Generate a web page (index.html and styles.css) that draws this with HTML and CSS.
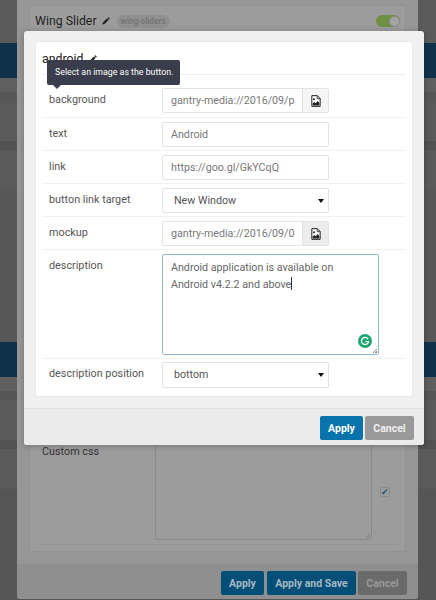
FILE: index.html
```html
<!DOCTYPE html>
<html lang="en">
<head>
    <meta charset="UTF-8">
    <meta name="viewport" content="width=device-width, initial-scale=1.0">
    <title>Wing Slider</title>
    <link rel="stylesheet" href="styles.css">
</head>
<body>
    <svg class="icon-defs" width="0" height="0">
        <symbol id="pencil" viewBox="0 0 10 10">
            <path d="M0.5 9.5l0.6-2.7 5-5 2.1 2.1-5 5zM6.8 1.4l0.7-0.7a0.6 0.6 0 0 1 0.9 0l1 1a0.6 0.6 0 0 1 0 0.9l-0.7 0.7z" fill="currentColor"/>
        </symbol>
        <symbol id="file-image" viewBox="0 0 12 14">
            <path d="M1 .6h6.6L11 4v9.4H1z" fill="#fff" stroke="#222" stroke-width="1.2"/>
            <path d="M7.4.8V4.2H11" fill="none" stroke="#222" stroke-width="1"/>
            <circle cx="3.6" cy="5" r="1.2" fill="#222"/>
            <path d="M2 12.4V10l2-1.8 1.6 1.4L8 7l2 2.4v3z" fill="#222"/>
        </symbol>
    </svg>

    <div class="backdrop">
        <div class="band band-a"></div>
        <div class="band band-blue"></div>
        <div class="band band-b"></div>
        <div class="band band-c"></div>
        <div class="band band-d"></div>
        <div class="band band-e"></div>
        <div class="band band-d"></div>
        <div class="band band-f"></div>
        <div class="band band-blue"></div>
        <div class="band band-b"></div>
        <div class="band band-c"></div>
        <div class="band band-d"></div>
        <div class="band band-e"></div>
        <div class="band band-d"></div>
    </div>

    <div class="outer-modal">
        <div class="outer-card">
            <div class="outer-head">
                <span class="outer-title">Wing Slider</span>
                <svg class="pencil-lg"><use href="#pencil"/></svg>
                <span class="badge">wing-sliders</span>
                <span class="toggle"><span class="knob"></span></span>
            </div>
            <div class="css-row">
                <div class="css-label">Custom css</div>
                <div class="css-field">
                    <div class="css-area"><span class="grip"></span></div>
                </div>
                <div class="css-check"><span class="checkbox">&#10003;</span></div>
            </div>
        </div>
        <div class="outer-foot">
            <button class="btn btn-blue btn-apply">Apply</button>
            <button class="btn btn-blue btn-save">Apply and Save</button>
            <button class="btn btn-grey">Cancel</button>
        </div>
    </div>

    <div class="modal">
        <div class="card">
            <div class="card-head">
                <span class="card-title">android</span>
                <svg class="pencil"><use href="#pencil"/></svg>
            </div>

            <div class="row row-first">
                <label class="label">background</label>
                <div class="picker">
                    <span class="picker-value">gantry-media://2016/09/p</span>
                    <span class="picker-btn"><svg class="file-icon"><use href="#file-image"/></svg></span>
                </div>
            </div>
            <div class="row">
                <label class="label">text</label>
                <div class="input">Android</div>
            </div>
            <div class="row">
                <label class="label">link</label>
                <div class="input">https://goo.gl/GkYCqQ</div>
            </div>
            <div class="row">
                <label class="label">button link target</label>
                <div class="select">New Window<span class="caret"></span></div>
            </div>
            <div class="row">
                <label class="label">mockup</label>
                <div class="picker">
                    <span class="picker-value">gantry-media://2016/09/0</span>
                    <span class="picker-btn picker-btn-on"><svg class="file-icon"><use href="#file-image"/></svg></span>
                </div>
            </div>
            <div class="row">
                <label class="label">description</label>
                <div class="textarea">
                    Android application is available on<br>
                    Android v4.2.2 and above<span class="cursor"></span>
                    <span class="grammarly">
                        <svg viewBox="0 0 14 14" width="14" height="14">
                            <circle cx="7" cy="7" r="7" fill="#1ba672"/>
                            <path d="M10.2 5.2A3.6 3.6 0 1 0 10.6 7.6H7.6" fill="none" stroke="#fff" stroke-width="1.3"/>
                        </svg>
                    </span>
                    <span class="grip"></span>
                </div>
            </div>
            <div class="row row-last">
                <label class="label">description position</label>
                <div class="select select-tall">bottom<span class="caret"></span></div>
            </div>
        </div>
        <div class="modal-foot">
            <button class="btn btn-primary">Apply</button>
            <button class="btn btn-cancel">Cancel</button>
        </div>

        <div class="tooltip">Select an image as the button.</div>
    </div>
</body>
</html>
```

FILE: styles.css
```css
* {
    box-sizing: border-box;
}
html, body {
    margin: 0;
    height: 600px;
    overflow: hidden;
}
body {
    position: relative;
    font-family: Roboto, Arial, sans-serif;
    background-color: #565656;
    color: #555;
}
.icon-defs {
    position: absolute;
}

/* stuff behind the overlay */
.band-a { height: 43px; background: #5b5b5b; }
.band-blue { height: 35px; background: #0f3149; }
.band-b { height: 14px; background: #5f5f5f; }
.band-c { height: 9px; background: #565656; }
.band-d { height: 40px; background: #5a5a5a; }
.band-e { height: 9px; background: #525252; }
.band-f { height: 152px; background: #585858; }

.outer-modal {
    position: absolute;
    left: 17px;
    top: 0;
    width: 401px;
    height: 599px;
    background: #979797;
    border-radius: 0 0 3px 3px;
    display: flex;
    flex-direction: column;
    padding: 5px 12px 0;
}
.outer-card {
    height: 547px;
    background: #9c9c9c;
    border: 1px solid #939393;
    border-radius: 2px;
    display: flex;
    flex-direction: column;
    justify-content: space-between;
}
.outer-head {
    display: flex;
    align-items: center;
    padding: 7px 5px 0 5px;
    color: #1f1f1f;
}
.outer-title {
    font-size: 12.3px;
    line-height: 16px;
}
.pencil-lg {
    width: 8px;
    height: 8px;
    margin-left: 5px;
}
.badge {
    margin-left: 7px;
    padding: 0 4px;
    height: 13px;
    line-height: 13px;
    font-size: 8.5px;
    color: #6c6c6c;
    background: #909090;
    border-radius: 7px;
}
.toggle {
    margin-left: auto;
    width: 24px;
    height: 12px;
    background: #6f8f43;
    border-radius: 6px;
    display: flex;
    justify-content: flex-end;
}
.knob {
    width: 11px;
    height: 11px;
    margin: 0.5px;
    background: #a3a3a3;
    border: 1px solid #8a8a8a;
    border-radius: 50%;
}
.css-row {
    display: flex;
    height: 100px;
    margin: 0 6px 6px;
    border-bottom: 1px solid #969696;
    color: #333;
    font-size: 10.8px;
    line-height: 14px;
}
.css-label {
    width: 113px;
    margin-left: 6px;
}
.css-field {
    width: 217px;
}
.css-area {
    position: relative;
    height: 95px;
    border: 1px solid #8a8a8a;
    border-top: 0;
    border-radius: 0 0 2px 2px;
}
.css-check {
    padding: 42px 0 0 8px;
}
.checkbox {
    display: block;
    width: 10px;
    height: 10px;
    background: #9c9c9c;
    border: 1px solid #8a8a8a;
    border-radius: 2px;
    color: #0d4a6b;
    font-size: 9px;
    line-height: 9px;
    font-weight: bold;
    text-align: center;
}
.outer-foot {
    display: flex;
    justify-content: flex-end;
    gap: 2px;
    flex: 1;
    margin: 11px -12px 0;
    padding: 7px 11px 0 0;
    background: #8f8f8f;
    border-top: 1px solid #939393;
    border-radius: 0 0 3px 3px;
}

/* foreground modal */
.modal {
    position: absolute;
    left: 24px;
    top: 31px;
    width: 400px;
    height: 414px;
    background: #f0f0f0;
    border-radius: 3px;
    box-shadow: 0 1px 6px rgba(0, 0, 0, 0.25);
    padding: 10px 11px 0;
}
.card {
    height: 356px;
    background: #fff;
    border: 1px solid #e8e8e8;
    border-radius: 2px;
    padding: 0 6px;
}
.card-head {
    height: 33px;
    border-bottom: 1px solid #eee;
    display: flex;
    align-items: center;
    padding-top: 2px;
    color: #222;
}
.card-title {
    font-size: 12.3px;
    line-height: 16px;
}
.pencil {
    width: 8px;
    height: 8px;
    margin-left: 6px;
}
.row {
    display: flex;
    align-items: flex-start;
    padding: 4px 0 3px 7px;
    border-bottom: 1px solid #f1f1f1;
}
.row-first {
    padding-top: 13px;
    padding-bottom: 4px;
}
.row-last {
    padding-top: 3px;
    border-bottom: 0;
}
.label {
    width: 113px;
    flex-shrink: 0;
    font-size: 10.8px;
    line-height: 14px;
    padding-top: 5px;
    color: #555;
}
.input, .select, .picker {
    width: 167px;
    height: 25px;
    background: #fff;
    border: 1px solid #e3e3e3;
    border-radius: 2px;
    font-size: 10.7px;
    line-height: 24px;
    color: #777;
}
.input {
    padding-left: 8px;
}
.select {
    position: relative;
    padding-left: 11px;
    color: #555;
}
.select-tall {
    height: 26px;
}
.caret {
    position: absolute;
    right: 4px;
    top: 10px;
    border: 3px solid transparent;
    border-top: 4px solid #111;
    border-bottom: 0;
}
.picker {
    display: flex;
}
.picker-value {
    flex: 1;
    padding-left: 8px;
    overflow: hidden;
    white-space: nowrap;
}
.picker-btn {
    width: 26px;
    background: #f5f5f5;
    border-left: 1px solid #e3e3e3;
    display: flex;
    align-items: center;
    justify-content: center;
}
.picker-btn-on {
    background: #ececec;
}
.file-icon {
    width: 10px;
    height: 12px;
}
.textarea {
    position: relative;
    width: 217px;
    height: 101px;
    border: 1px solid #8fb9d3;
    border-radius: 2px;
    padding: 4px 8px 0;
    font-size: 10.7px;
    line-height: 17px;
    color: #666;
}
.cursor {
    display: inline-block;
    width: 1px;
    height: 13px;
    background: #333;
    vertical-align: -2px;
}
.grammarly {
    position: absolute;
    right: 6px;
    bottom: 6px;
    height: 14px;
}
.grip {
    position: absolute;
    right: 1px;
    bottom: 1px;
    width: 6px;
    height: 6px;
    background: repeating-linear-gradient(135deg, transparent 0, transparent 1px, #888 1px, #888 2px);
    clip-path: polygon(100% 0, 100% 100%, 0 100%);
}
.modal-foot {
    display: flex;
    justify-content: flex-end;
    gap: 2px;
    height: 37px;
    margin: 11px -11px 0;
    padding: 7px 10px 0;
    background: #ebebeb;
    border-top: 1px solid #e3e3e3;
    border-radius: 0 0 3px 3px;
}
.btn {
    height: 24px;
    padding: 0;
    border: 0;
    border-radius: 2px;
    font-family: Roboto, Arial, sans-serif;
    font-size: 10.5px;
    font-weight: 700;
}
.btn-primary {
    width: 43px;
    background: #0a73ab;
    color: #fff;
}
.btn-cancel {
    width: 49px;
    background: #9a9a9a;
    color: #f0f0f0;
}
.btn-blue {
    background: #044f78;
    color: #a8b8c2;
}
.btn-apply {
    width: 43px;
    margin-right: 1px;
}
.btn-save {
    width: 89px;
}
.btn-grey {
    width: 49px;
    background: #6a6a6a;
    color: #999;
}
.tooltip {
    position: absolute;
    left: 23px;
    top: 29px;
    width: 133px;
    height: 25px;
    background: #3a3d4b;
    border-radius: 2px;
    color: #fff;
    font-size: 8.8px;
    line-height: 25px;
    padding-left: 8px;
    white-space: nowrap;
}
.tooltip::after {
    content: "";
    position: absolute;
    left: 1px;
    top: 100%;
    margin-left: 5px;
    border: 4px solid transparent;
    border-top-color: #3a3d4b;
    border-bottom: 0;
}
```
